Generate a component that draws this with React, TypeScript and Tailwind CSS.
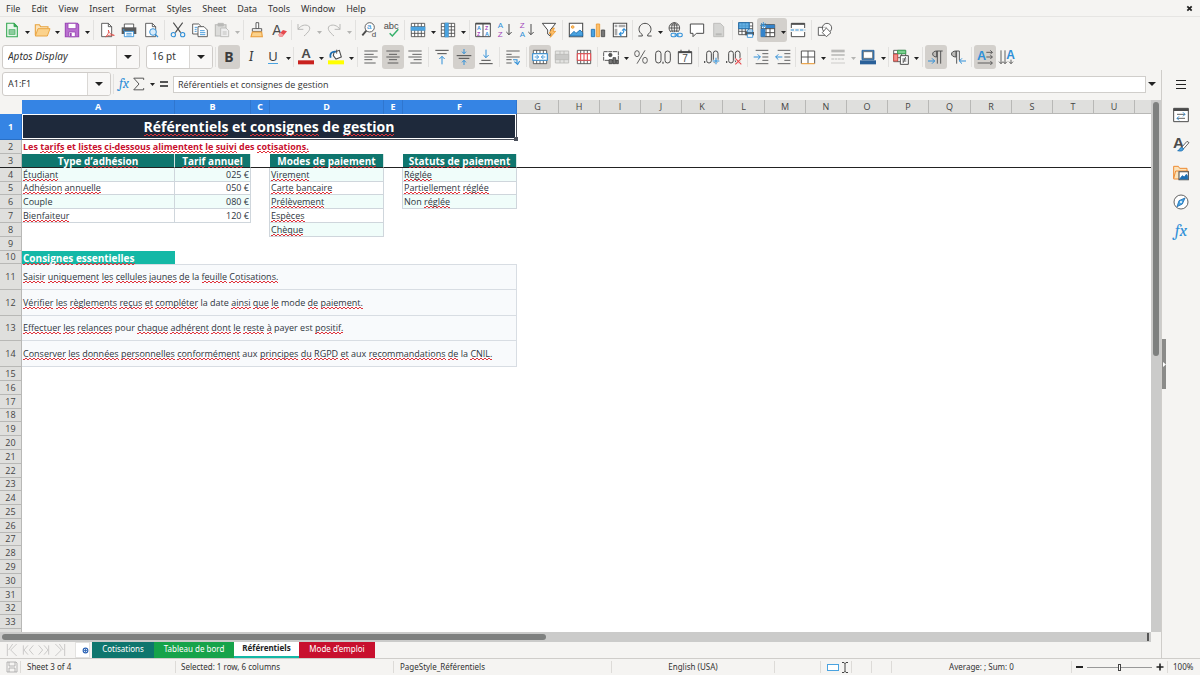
import type { ReactNode } from "react";

const BLUE = "#2f8fd8";
const INK = "#4b4b4b";
const PALE = "#b9b9b7";
const PURPLE = "#a347ba";

function Svg({ children, size = 16 }: { children: ReactNode; size?: number }) {
  return (
    <svg
      width={size}
      height={size}
      viewBox="0 0 24 24"
      fill="none"
      stroke={INK}
      strokeWidth={1.3}
      aria-hidden="true"
      className="shrink-0 overflow-visible font-['Liberation_Sans',sans-serif]"
    >
      {children}
    </svg>
  );
}

function Glyph({
  x,
  y,
  size,
  fill = INK,
  bold,
  children,
}: {
  x: number;
  y: number;
  size: number;
  fill?: string;
  bold?: boolean;
  children: string;
}) {
  return (
    <text x={x} y={y} fontSize={size} fill={fill} stroke="none" fontWeight={bold ? 700 : 400}>
      {children}
    </text>
  );
}

const page = "M4 2h10l5 5v15H4z";
const gridLines = "M2 2h20v20H2zM2 7h20M2 12h20M2 17h20M7 2v20M12 2v20M17 2v20";

const icons: Record<string, ReactNode> = {
  new: (
    <>
      <path d="M4 2h11l5 5v15H4z" fill="#e9f7ec" stroke="#35a853" strokeWidth={1.6} />
      <path d="M15 2v5h5z" fill="#35a853" stroke="#35a853" />
      <path d="M7 11h10v8H7z" fill="#35a853" stroke="none" />
      <path d="M8 13.500h8M8 16.500h8" stroke="#fff" />
    </>
  ),
  open: (
    <>
      <path d="M2 20V4h6l2 3h11v3" fill="#fbe3bb" stroke="#e8a33d" strokeWidth={1.6} />
      <path d="M2 21 6 10h18l-4 11z" fill="#fbd28c" stroke="#e8a33d" strokeWidth={1.4} />
    </>
  ),
  save: (
    <>
      <path d="M2 2h18l2 2v18H2z" fill="#b96fd0" stroke="#9a45b5" strokeWidth={1.6} />
      <path d="M6 2h12v8H6z" fill="#fff" stroke="#9a45b5" />
      <path d="M7 15h10v7H7z" fill="#fff" stroke="#9a45b5" />
      <path d="M8.500 16.500h3v5h-3z" fill="#9a45b5" stroke="none" />
    </>
  ),
  pdf: (
    <>
      <path d={page} fill="#fff" />
      <path d="M14 2v5h5" />
      <path d="M10 22c4-3 5-7 4-10 1 5 4 7 9 8-5-1-9 0-13 2z" stroke="#e0453f" strokeWidth={1.2} />
    </>
  ),
  print: (
    <>
      <path d="M5 9V3h14v6" fill="#fff" />
      <path d="M1 8h22v10H1z" fill="#5a5a5a" stroke="none" />
      <path d="M3 11h2v2H3z" fill={BLUE} stroke="none" />
      <path d="M5 14h14v8H5z" fill="#fff" stroke={BLUE} />
      <path d="M8 17h8M8 19.500h8" stroke={BLUE} />
    </>
  ),
  preview: (
    <>
      <path d={page} fill="#fff" />
      <path d="M14 2v5h5" />
      <circle cx="15" cy="15" r="5" fill="#d9ecfa" stroke={BLUE} strokeWidth={1.4} />
      <path d="m18.500 18.500 4 4" stroke={BLUE} strokeWidth={1.8} />
    </>
  ),
  cut: (
    <>
      <path d="m5 1 11 15M19 1 8 16" strokeWidth={1.6} />
      <circle cx="5" cy="19" r="3.200" stroke={BLUE} strokeWidth={1.6} />
      <circle cx="19" cy="19" r="3.200" stroke={BLUE} strokeWidth={1.6} />
    </>
  ),
  copy: (
    <>
      <path d="M1 3h9l4 4v11H1z" fill="#fff" />
      <path d="M9 7h9l5 5v10H9z" fill="#fff" />
      <path d="M4 8h4M4 11h3M4 14h3M12 13h7M12 16h8M12 19h8" stroke={BLUE} />
    </>
  ),
  paste: (
    <>
      <path d="M2 4h16v17H2z" fill="#dcdcda" stroke={PALE} strokeWidth={1.6} />
      <path d="M6 2h8v4H6z" fill={PALE} stroke={PALE} />
      <path d="M10 9h8l4 4v9H10z" fill="#eee" stroke={PALE} />
      <path d="M13 15h6M13 18h6" stroke={PALE} />
    </>
  ),
  clone: (
    <>
      <path d="M10.500 1h4v9h-4z" fill="#fff" />
      <path d="M5 10h14v4H5z" fill="#fff" />
      <path d="M5 15h14l1 7H3z" fill="#fbd28c" stroke="#ea9b36" strokeWidth={1.6} />
    </>
  ),
  clear: (
    <>
      <Glyph x={2} y={19} size={21}>A</Glyph>
      <path d="m11 19 7-7 6 2-7 8h-4z" fill="#e5484d" stroke="none" />
      <path d="m11 19 3-3 5 3-3 3h-3z" fill="#f2a0a2" stroke="none" />
    </>
  ),
  undo: <path d="M3 3v8h8M3 11C7 5 14 3 19 6c4 4 0 9-7 15" stroke={PALE} strokeWidth={1.5} />,
  redo: <path d="M21 3v8h-8M21 11C17 5 10 3 5 6c-4 4 0 9 7 15" stroke={PALE} strokeWidth={1.5} />,
  find: (
    <>
      <circle cx="13" cy="8" r="7" fill="#fff" />
      <path d="m8 13-6 7" strokeWidth={2.8} />
      <Glyph x={9} y={11} size={12} fill={BLUE}>a</Glyph>
      <Glyph x={16} y={23} size={12}>d</Glyph>
    </>
  ),
  spell: (
    <>
      <Glyph x={1} y={11} size={14}>abc</Glyph>
      <path d="m10 17 4 4 9-10" stroke="#35b06a" strokeWidth={2.2} />
    </>
  ),
  row: (
    <>
      <path d={gridLines} fill="#fff" />
      <path d="M1 7h22v6H1z" fill="#4aa3e0" stroke="none" />
    </>
  ),
  col: (
    <>
      <path d={gridLines} fill="#fff" />
      <path d="M7 1h6v22H7z" fill="#4aa3e0" stroke="none" />
    </>
  ),
  sort: (
    <>
      <path d="M1 2h22v20H1zM12 2v20" fill="#fff" strokeWidth={1.5} />
      <path d="M1 2.500h22" strokeWidth={2.500} />
      <Glyph x={3} y={12} size={8} fill={BLUE} bold>A</Glyph>
      <Glyph x={3} y={21} size={8} fill={PURPLE} bold>Z</Glyph>
      <Glyph x={15} y={12} size={8} fill={PURPLE} bold>Z</Glyph>
      <Glyph x={15} y={21} size={8} fill={BLUE} bold>A</Glyph>
    </>
  ),
  az: (
    <>
      <Glyph x={1} y={9} size={12} fill={BLUE}>A</Glyph>
      <Glyph x={1} y={23} size={12} fill={PURPLE}>Z</Glyph>
      <path d="M18 3v16m-4-4 4 4 4-4" strokeWidth={1.5} />
    </>
  ),
  za: (
    <>
      <Glyph x={1} y={9} size={12} fill={PURPLE}>Z</Glyph>
      <Glyph x={1} y={23} size={12} fill={BLUE}>A</Glyph>
      <path d="M18 3v16m-4-4 4 4 4-4" strokeWidth={1.5} />
    </>
  ),
  filter: (
    <>
      <path d="M2 2h20l-8 10v9l-4-3v-6z" fill="#fff" strokeWidth={1.5} />
      <path d="m18 9-6 8h4l-2 6 8-9h-4l2-5z" fill="#fbbf6b" stroke="#ee9b33" />
    </>
  ),
  image: (
    <>
      <path d="M2 2h20v20H2z" fill="#fff" strokeWidth={1.6} />
      <circle cx="7" cy="7.500" r="2" fill="#fbbf6b" stroke="#ee9b33" />
      <path d="m3 20 6-6 3 3 6-5 4 4v5H3z" fill="#4aa3e0" stroke="#1f6fb2" />
    </>
  ),
  chart: (
    <>
      <path d="M2 11h5v11H2z" fill="#4aa3e0" stroke="#1f6fb2" />
      <path d="M9.500 3h5v19h-5z" fill="#fbbf6b" stroke="#ea9b36" />
      <path d="M17 12h5v10h-5z" fill="#777" />
    </>
  ),
  pivot: (
    <>
      <path d="M2 2h20v20H2z" fill="#fff" strokeWidth={1.6} />
      <path d="M4 4h4v4H4zM10 4h10v4H10zM4 10h4v10H4z" fill="#aaa" stroke="none" />
      <path d="M11 18c5 1 7-2 7-7m-3 2 3-3 3 3m-7 2-3 3 3 3" stroke={BLUE} strokeWidth={1.6} />
    </>
  ),
  omega: <path d="M2 21h6v-2c-3-2-5-5-5-8 0-5 4-9 9-9s9 4 9 9c0 3-2 6-5 8v2h6" strokeWidth={1.5} />,
  link: (
    <>
      <circle cx="11" cy="9" r="8" />
      <path d="M3 9h16M11 1v16M5 4.500h12M5 13.500h12" />
      <ellipse cx="11" cy="9" rx="4" ry="8" />
      <path d="M6 15h18v8H6z" fill="#f5f4f2" stroke="none" />
      <rect x="6" y="17" width="8" height="5" rx="2.500" stroke={BLUE} strokeWidth={1.6} />
      <rect x="15" y="17" width="8" height="5" rx="2.500" stroke={BLUE} strokeWidth={1.6} />
      <path d="M11 19.500h7" stroke={BLUE} strokeWidth={1.6} />
    </>
  ),
  comment: <path d="M2 3h20v14H11l-5 5v-5H2z" fill="#fff" strokeWidth={1.5} />,
  header: (
    <>
      <path d={page} fill="#d5d5d3" stroke={PALE} />
      <path d="M7 17h9v3H7z" fill={PALE} stroke="none" />
    </>
  ),
  printArea: (
    <>
      <path d="M1 1h21v18H1zM1 6h21M1 10h21M1 14h21M6 1v18M11 1v18M16 1v18" fill="#fff" />
      <path d="M1 1h16v9H1z" fill="#4aa3e0" fillOpacity={0.85} stroke="#1f6fb2" />
      <path d="M11 15h13v5H11z" fill="#555" stroke="none" />
      <path d="M14 12h8v3h-8zM14 18h8v5h-8z" fill="#fff" stroke={BLUE} />
    </>
  ),
  freeze: (
    <>
      <path d="M2 4h20v18H2zM2 10h20M2 16h20M9 4v18M15 4v18" fill="#fff" strokeWidth={1.5} />
      <path d="M1 10h7v12H1zM9 4h13v5H9z" fill="#3484cc" stroke="none" />
      <path d="M5 0v10M0 5h10M1.500 1.500l7 7M8.500 1.500l-7 7" stroke={BLUE} />
    </>
  ),
  split: (
    <>
      <path d="M2 9V2h20v7M2 15v7h20v-7" fill="#fff" strokeWidth={1.5} />
      <path d="M2 3h20" strokeWidth={2.500} />
      <path d="M1 12h22" stroke={BLUE} strokeWidth={1.6} strokeDasharray="5 2" />
    </>
  ),
  shapes: (
    <>
      <path d="M2 8h12v12H2z" fill="#fff" />
      <circle cx="15" cy="9" r="7" fill="#fff" fillOpacity={0.6} />
      <path d="m14 9 7 7-7 6-6-6z" fill="#fff" />
    </>
  ),
  fontColor: (
    <>
      <Glyph x={5} y={14} size={20} bold>A</Glyph>
      <path d="M0 17h24v6H0z" fill="#c9211e" stroke="none" />
    </>
  ),
  fill: (
    <>
      <path d="m9 5 8-3 3 10-8 3-4-5z" fill="#fff" strokeWidth={1.6} />
      <path d="M4 13C2 7 6 3 12 4" stroke="#1f6fb2" strokeWidth={2.600} />
      <path d="M13 1v6" />
      <path d="M0 17h24v6H0z" fill="#ffff00" stroke="none" />
    </>
  ),
  left: <path d="M2 3h20M2 8h14M2 12h20M2 16h12M2 21h17" />,
  center: <path d="M2 3h20M6 8h12M2 12h20M6 16h12M4 21h16" />,
  right: <path d="M2 3h20M8 8h14M2 12h20M10 16h12M5 21h17" />,
  top: (
    <>
      <path d="M2 2h20M5 7h14" strokeWidth={1.5} />
      <path d="M12 23V11m-4 4 4-4 4 4" stroke={BLUE} strokeWidth={1.5} />
    </>
  ),
  middle: (
    <>
      <path d="M1 10h22M4 14h16" strokeWidth={1.5} />
      <path d="M12 0v7M9 4l3 3 3-3M12 24v-7m-3 3 3-3 3 3" stroke={BLUE} strokeWidth={1.5} />
    </>
  ),
  bottom: (
    <>
      <path d="M2 22h20M5 17h14" strokeWidth={1.5} />
      <path d="M12 1v12m-4-4 4 4 4-4" stroke={BLUE} strokeWidth={1.5} />
    </>
  ),
  wrap: (
    <>
      <path d="M2 3h20M2 8h8M2 12h20M2 16h8M2 21h8" />
      <path d="M12 16h6v5m-4-2 5 4 3-5" stroke={BLUE} strokeWidth={1.6} />
    </>
  ),
  merge: (
    <>
      <path d={gridLines} fill="#fff" />
      <path d="M1 7h22v10H1z" fill="#fff" stroke={BLUE} strokeWidth={1.6} />
      <path d="M4 12h6m-3-3 3 3-3 3M20 12h-6m3-3-3 3 3 3" stroke={BLUE} />
    </>
  ),
  mergeOff: (
    <>
      <path d="M2 3h20v18H2zM9 3v18M15 3v18" fill="#e4e4e2" stroke={PALE} />
      <path d="M2 8h20v8H2z" fill="#c9c9c7" stroke={PALE} />
    </>
  ),
  unmerge: (
    <>
      <path d={gridLines} fill="#fff" />
      <path d="M2 7h20v10H2zM7 7v10M12 7v10M17 7v10" fill="#fff" stroke="#e5484d" strokeWidth={1.6} />
    </>
  ),
  currency: (
    <>
      <path d="M1 4h22v13H1z" fill="#fff" strokeWidth={1.4} strokeDasharray="6 1" />
      <circle cx="11" cy="9" r="2.500" fill="#555" />
      <path d="M9 16h5v6H9zM15 13h4v9h-4zM20 17h3v5h-3z" fill="#777" stroke="#444" />
    </>
  ),
  percent: (
    <>
      <ellipse cx="6" cy="7" rx="3.500" ry="4.500" />
      <ellipse cx="18" cy="17" rx="3.500" ry="4.500" />
      <path d="M18 2 6 22" />
    </>
  ),
  number: (
    <>
      <rect x="1" y="3" width="8" height="18" rx="4" strokeWidth={1.5} />
      <rect x="15" y="3" width="8" height="18" rx="4" strokeWidth={1.5} />
      <path d="M12 19v3" strokeWidth={1.8} />
    </>
  ),
  date: (
    <>
      <path d="M2 4h20v18H2z" fill="#fff" strokeWidth={1.5} />
      <path d="M2 5h20" strokeWidth={2.500} />
      <path d="M6 1v4M18 1v4" strokeWidth={1.6} />
      <Glyph x={8} y={20} size={15}>7</Glyph>
    </>
  ),
  decAdd: (
    <>
      <path d="M1 18v3" strokeWidth={1.8} />
      <rect x="4" y="3" width="7" height="18" rx="3.500" strokeWidth={1.5} />
      <rect x="14" y="3" width="7" height="18" rx="3.500" strokeWidth={1.5} />
      <path d="M18 13v10M13 18h10" stroke="#f5f4f2" strokeWidth={4} />
      <path d="M18 13v10M13 18h10" stroke={BLUE} strokeWidth={1.600} />
    </>
  ),
  decDel: (
    <>
      <path d="M1 18v3" strokeWidth={1.8} />
      <rect x="4" y="3" width="7" height="18" rx="3.500" strokeWidth={1.5} />
      <rect x="14" y="3" width="7" height="18" rx="3.500" strokeWidth={1.5} />
      <path d="m14 14 9 9M23 14l-9 9" stroke="#f5f4f2" strokeWidth={4} />
      <path d="m14 14 9 9M23 14l-9 9" stroke="#e5484d" strokeWidth={1.600} />
    </>
  ),
  indent: (
    <>
      <path d="M4 2h19M14 7h9M14 12h9M14 17h9M4 22h19" />
      <path d="M1 12h10m-4-4 4 4-4 4" stroke={BLUE} strokeWidth={1.500} />
    </>
  ),
  outdent: (
    <>
      <path d="M4 2h19M14 7h9M14 12h9M14 17h9M4 22h19" />
      <path d="M11 12H1m4-4-4 4 4 4" stroke={BLUE} strokeWidth={1.500} />
    </>
  ),
  borders: (
    <>
      <path d="M2 22V3h20v19M12 3v19M2 12h20" fill="#fff" strokeWidth={1.4} />
      <path d="M2 22h20" stroke="#ea9b36" strokeWidth={1.600} />
    </>
  ),
  lineStyle: (
    <>
      <path d="M2 3h20" stroke={PALE} strokeWidth={4} />
      <path d="M2 9h20" stroke={PALE} strokeWidth={2.400} />
      <path d="M2 15h20" stroke={PALE} strokeWidth={1.800} strokeDasharray="4 1" />
      <path d="M2 21h20" stroke={PALE} strokeWidth={1.800} strokeDasharray="2 1" />
    </>
  ),
  lineColor: (
    <>
      <path d="M3 2h18v14H3z" fill="#2f7fc4" stroke="#2a6099" strokeWidth={1.2} />
      <path d="M5 4h14v10H5z" fill="#fff" stroke="#666" strokeWidth={1.2} />
      <path d="M0 17h24v6H0z" fill="#2a6099" stroke="none" />
    </>
  ),
  conditional: (
    <>
      <path d="M1 2h18v17H1zM1 7h18M1 13h18M7 2v17M13 2v17" fill="#fff" />
      <path d="M7 2h12v5H7z" fill="#7ccf90" stroke="#35a853" />
      <path d="M1 8h6v10H1z" fill="#f0918c" stroke="#d84a43" />
      <path d="M11 10h12v13H11z" fill="#fff" strokeWidth={1.500} />
      <path d="M14 15h6M14 18h6M19 12l-4 9" />
    </>
  ),
  ltr: (
    <>
      <path d="M22 3H13c-8 0-8 9 0 9V3M14 3v19M19 3v19" fill="#bcbab7" strokeWidth={1.400} />
      <path d="M0 18h10m-4-4 4 4-4 4" stroke={BLUE} strokeWidth={1.500} />
    </>
  ),
  rtl: (
    <>
      <path d="M14 3H9c-9 0-9 9 0 9V3M10 3v19M14 3v14" fill="#bcbab7" strokeWidth={1.400} />
      <path d="M24 18H14m4-4-4 4 4 4" stroke={BLUE} strokeWidth={1.500} />
    </>
  ),
  horizontal: (
    <>
      <Glyph x={0} y={16} size={19} fill={BLUE} bold>A</Glyph>
      <path d="M14 5h9m-3-3 3 3-3 3M14 12h9m-3-3 3 3-3 3M1 21h22m-3-3 3 3-3 3" />
    </>
  ),
  vertical: (
    <>
      <Glyph x={11} y={15} size={18} fill={BLUE} bold>A</Glyph>
      <path d="M3 2v20m-3-3 3 3 3-3M9 2v20m-3-3 3 3 3-3M18 16v6m-3-3 3 3 3-3" />
    </>
  ),
  properties: (
    <>
      <path d="M1 2h22v20H1z" fill="#fff" strokeWidth={1.500} />
      <path d="M1 4h22" strokeWidth={4} />
      <path d="M6 11h12M6 17h12" />
      <path d="m15 8 3 3-3 3M9 14l-3 3 3 3" stroke={BLUE} strokeWidth={1.500} />
    </>
  ),
  styles: (
    <>
      <Glyph x={0} y={18} size={23} bold>A</Glyph>
      <path d="m13 17 8-9 3 2-8 9z" fill="#fff" />
      <path d="M7 22c3 0 3-5 6-5l3 2c-1 4-5 4-9 3z" fill="#4aa3e0" stroke="#1f6fb2" />
    </>
  ),
  gallery: (
    <>
      <path d="M1 20V2h7l2 3h11v5M1 20 4 9h19l-2 12H1z" fill="#fbe3bb" stroke="#ee8b33" strokeWidth={1.500} />
      <path d="M9 10h14v12H9z" fill="#fff" strokeWidth={1.600} />
      <path d="m10 21 4-5 3 2 3-4 2 3v4z" fill="#1f6fb2" stroke="#1f6fb2" />
    </>
  ),
  navigator: (
    <>
      <circle cx="12" cy="12" r="10.500" fill="#fff" />
      <path d="m18 6-4 9-8 4 3-9z" fill="#4aa3e0" stroke="#1f6fb2" />
      <circle cx="12" cy="12" r="1.500" fill="#fff" stroke="none" />
    </>
  ),
  floppy: <path d="M2 2h18l2 2v18H2zM6 2v8h12V2M6 22v-8h12v8" stroke="#a2a2a0" strokeWidth={1.500} />,
};

type Tool = { icon: string; label: string; menu?: boolean; on?: boolean; off?: boolean };
type ToolGroup = { tools: Tool[]; tight?: boolean };

const standardBar: ToolGroup[] = [
  {
    tools: [
      { icon: "new", label: "New", menu: true },
      { icon: "open", label: "Open", menu: true },
      { icon: "save", label: "Save", menu: true },
    ],
  },
  {
    tools: [
      { icon: "pdf", label: "Export as PDF" },
      { icon: "print", label: "Print" },
      { icon: "preview", label: "Print Preview" },
    ],
  },
  {
    tools: [
      { icon: "cut", label: "Cut" },
      { icon: "copy", label: "Copy" },
      { icon: "paste", label: "Paste", menu: true, off: true },
    ],
  },
  {
    tight: true,
    tools: [
      { icon: "clone", label: "Clone Formatting" },
      { icon: "clear", label: "Clear Direct Formatting" },
    ],
  },
  {
    tools: [
      { icon: "undo", label: "Undo", menu: true, off: true },
      { icon: "redo", label: "Redo", menu: true, off: true },
    ],
  },
  {
    tools: [
      { icon: "find", label: "Find and Replace" },
      { icon: "spell", label: "Spelling" },
    ],
  },
  {
    tools: [
      { icon: "row", label: "Row", menu: true },
      { icon: "col", label: "Column", menu: true },
    ],
  },
  {
    tools: [
      { icon: "sort", label: "Sort" },
      { icon: "az", label: "Sort Ascending" },
      { icon: "za", label: "Sort Descending" },
      { icon: "filter", label: "AutoFilter" },
    ],
  },
  {
    tight: true,
    tools: [
      { icon: "image", label: "Insert Image" },
      { icon: "chart", label: "Insert Chart" },
      { icon: "pivot", label: "Pivot Table" },
    ],
  },
  {
    tools: [
      { icon: "omega", label: "Special Character", menu: true },
      { icon: "link", label: "Hyperlink" },
      { icon: "comment", label: "Comment" },
      { icon: "header", label: "Headers and Footers", off: true },
    ],
  },
  {
    tools: [
      { icon: "printArea", label: "Define Print Area" },
      { icon: "freeze", label: "Freeze Rows and Columns", menu: true, on: true },
      { icon: "split", label: "Split Window" },
    ],
  },
  { tools: [{ icon: "shapes", label: "Show Draw Functions" }] },
];

const formattingBar: ToolGroup[] = [
  {
    tight: true,
    tools: [
      { icon: "bold", label: "Bold", on: true },
      { icon: "italic", label: "Italic" },
      { icon: "underline", label: "Underline", menu: true },
    ],
  },
  {
    tools: [
      { icon: "fontColor", label: "Font Color", menu: true },
      { icon: "fill", label: "Background Color", menu: true },
    ],
  },
  {
    tools: [
      { icon: "left", label: "Align Left" },
      { icon: "center", label: "Center Horizontally", on: true },
      { icon: "right", label: "Align Right" },
    ],
  },
  {
    tools: [
      { icon: "top", label: "Align Top" },
      { icon: "middle", label: "Center Vertically", on: true },
      { icon: "bottom", label: "Align Bottom" },
    ],
  },
  { tools: [{ icon: "wrap", label: "Wrap Text" }] },
  {
    tools: [
      { icon: "merge", label: "Merge and Center Cells", on: true },
      { icon: "mergeOff", label: "Merge Cells", off: true },
      { icon: "unmerge", label: "Unmerge Cells" },
    ],
  },
  {
    tools: [
      { icon: "currency", label: "Format as Currency", menu: true },
      { icon: "percent", label: "Format as Percent" },
      { icon: "number", label: "Format as Number" },
      { icon: "date", label: "Format as Date" },
    ],
  },
  {
    tools: [
      { icon: "decAdd", label: "Add Decimal Place" },
      { icon: "decDel", label: "Delete Decimal Place" },
    ],
  },
  {
    tight: true,
    tools: [
      { icon: "indent", label: "Increase Indent" },
      { icon: "outdent", label: "Decrease Indent" },
    ],
  },
  {
    tight: true,
    tools: [
      { icon: "borders", label: "Borders", menu: true },
      { icon: "lineStyle", label: "Border Style", menu: true, off: true },
      { icon: "lineColor", label: "Border Color", menu: true },
    ],
  },
  { tools: [{ icon: "conditional", label: "Conditional Formatting", menu: true }] },
  {
    tools: [
      { icon: "ltr", label: "Left-To-Right", on: true },
      { icon: "rtl", label: "Right-To-Left" },
    ],
  },
  {
    tools: [
      { icon: "horizontal", label: "Text direction from left to right", on: true },
      { icon: "vertical", label: "Text direction from top to bottom" },
    ],
  },
];

const letterIcons: Record<string, ReactNode> = {
  bold: <span className="text-sm leading-none font-bold text-[#3c3c3c]">B</span>,
  italic: <span className="font-serif text-sm leading-none text-[#3c3c3c] italic">I</span>,
  underline: (
    <span className="border-b border-[#4aa3e0] text-[13px] leading-[13px] text-[#3c3c3c]">U</span>
  ),
};

function Caret({ off, large }: { off?: boolean; large?: boolean }) {
  return (
    <svg
      width={large ? 8 : 5}
      height={large ? 4 : 3}
      viewBox="0 0 10 6"
      preserveAspectRatio="none"
      aria-hidden="true"
      className="shrink-0"
    >
      <path d="M0 0h10L5 6z" fill={off ? "#b5b5b3" : "#222"} />
    </svg>
  );
}

function ToolButton({ tool }: { tool: Tool }) {
  return (
    <div className={tool.on ? "flex rounded-[3px] bg-[#d3d0cc]" : "flex"}>
      <button
        type="button"
        aria-label={tool.label}
        aria-pressed={tool.on}
        disabled={tool.off}
        className="flex h-6 w-[22px] items-center justify-center"
      >
        {letterIcons[tool.icon] ?? <Svg>{icons[tool.icon]}</Svg>}
      </button>
      {tool.menu && (
        <button
          type="button"
          aria-label={`${tool.label} options`}
          disabled={tool.off}
          className="flex h-6 w-2 items-center justify-center pt-1"
        >
          <Caret off={tool.off} />
        </button>
      )}
    </div>
  );
}

function Toolbar({ groups }: { groups: ToolGroup[] }) {
  return (
    <>
      {groups.map((group, i) => (
        <div key={group.tools[0].icon} className="flex items-center">
          {group.tools.map((tool) => (
            <ToolButton key={tool.icon} tool={tool} />
          ))}
          {i < groups.length - 1 && (
            <div className={group.tight ? "flex w-[3px] justify-center" : "flex w-[5px] justify-center"}>
              <div className="h-5 w-px bg-[#e2e1df]" />
            </div>
          )}
        </div>
      ))}
    </>
  );
}

function Combo({
  label,
  value,
  field,
  button,
}: {
  label: string;
  value: string;
  field: string;
  button: string;
}) {
  return (
    <div className="flex h-6 overflow-hidden rounded-[3px] border border-[#cfccc9] bg-white">
      <input aria-label={label} defaultValue={value} className={`bg-transparent pl-[5px] outline-none ${field}`} />
      <button
        type="button"
        aria-label={`${label} list`}
        className={`flex items-center justify-center border-l border-[#dad8d5] bg-[#f8f7f6] ${button}`}
      >
        <Caret large />
      </button>
    </div>
  );
}

const menus = ["File", "Edit", "View", "Insert", "Format", "Styles", "Sheet", "Data", "Tools", "Window", "Help"];

const ROW_SCALE = 0.919;
const COLUMNS = [153, 76, 19, 114, 19, 114];
const LETTERS = "ABCDEFGHIJKLMNOPQRSTU".split("");

const tallRows = [1, 11, 12, 13, 14];
const rowPoints = Array.from({ length: 33 }, (_, i) => (tallRows.includes(i + 1) ? 28 : 15));

function rowHeight(row: number) {
  const before = rowPoints.slice(0, row - 1).reduce((a, b) => a + b, 0);
  return Math.ceil((before + rowPoints[row - 1]) * ROW_SCALE) - Math.ceil(before * ROW_SCALE);
}

function columnWidth(i: number) {
  if (i < COLUMNS.length) return COLUMNS[i];
  const n = i - COLUMNS.length;
  return Math.ceil((n + 1) * 41.2) - Math.ceil(n * 41.2);
}

/* Words between underscores are the ones the spell checker flags. */
function Spelled({ text }: { text: string }) {
  return (
    <>
      {text.split("_").map((part, i) =>
        i % 2 === 1 ? (
          <span
            key={i}
            className="bg-[linear-gradient(90deg,#e0323a_50%,transparent_50%),linear-gradient(90deg,#e0323a_50%,transparent_50%)] bg-[length:4px_1px,4px_1px] bg-[position:0_100%,2px_calc(100%_-_1px)] bg-repeat-x"
          >
            {part}
          </span>
        ) : (
          part
        ),
      )}
    </>
  );
}

type Cell = { text: string; span?: number; style: string };

const th = "bg-[#0f766e] text-center text-[10px] font-bold text-white border-r border-[#d5e5e3]";
const teal = "bg-[#f0fdfa] border-b border-r border-[#cfd6dc]";
const plain = "border-b border-r border-[#cfd6dc]";
const note = "bg-[#f8fafc] border-b border-r border-[#d8dde3]";

const cells: Record<string, Cell> = {
  A1: {
    text: "_Référentiels_ et _consignes_ de _gestion_",
    span: 6,
    style:
      "relative bg-[#1e293b] text-center text-[14px] leading-5 font-bold text-white border-b border-r border-[#4a4f5a] shadow-[inset_0_0_0_1px_#fff]",
  },
  A2: {
    text: "Les _tarifs_ et _listes_ _ci-dessous_ _alimentent_ _le_ _suivi_ des _cotisations._",
    span: 6,
    style: "font-bold text-[#c8102e]",
  },
  A3: { text: "Type _d’adhésion_", style: th },
  B3: { text: "_Tarif_ _annuel_", style: th },
  D3: { text: "Modes _de_ _paiement_", style: th },
  F3: { text: "_Statuts_ _de_ _paiement_", style: th },
  A4: { text: "_Étudiant_", style: teal },
  B4: { text: "025 €", style: `${teal} text-right` },
  D4: { text: "_Virement_", style: teal },
  F4: { text: "_Réglée_", style: teal },
  A5: { text: "_Adhésion_ _annuelle_", style: plain },
  B5: { text: "050 €", style: `${plain} text-right` },
  D5: { text: "_Carte_ _bancaire_", style: plain },
  F5: { text: "_Partiellement_ _réglée_", style: plain },
  A6: { text: "Couple", style: teal },
  B6: { text: "080 €", style: `${teal} text-right` },
  D6: { text: "_Prélèvement_", style: teal },
  F6: { text: "Non _réglée_", style: teal },
  A7: { text: "_Bienfaiteur_", style: plain },
  B7: { text: "120 €", style: `${plain} text-right` },
  D7: { text: "_Espèces_", style: plain },
  D8: { text: "_Chèque_", style: teal },
  A10: { text: "_Consignes_ _essentielles_", style: "bg-[#14b8a6] text-[10px] font-bold text-white" },
  A11: {
    text: "_Saisir_ _uniquement_ _les_ _cellules_ _jaunes_ _de_ la _feuille_ _Cotisations._",
    span: 6,
    style: `${note} border-t`,
  },
  A12: {
    text: "_Vérifier_ _les_ _règlements_ _reçus_ _et_ _compléter_ la date _ainsi_ _que_ _le_ mode _de_ _paiement._",
    span: 6,
    style: note,
  },
  A13: {
    text: "_Effectuer_ _les_ _relances_ pour _chaque_ _adhérent_ _dont_ _le_ _reste_ _à_ payer est _positif._",
    span: 6,
    style: note,
  },
  A14: {
    text: "_Conserver_ _les_ _données_ _personnelles_ _conformément_ aux _principes_ _du_ _RGPD_ _et_ aux _recommandations_ _de_ la _CNIL._",
    span: 6,
    style: note,
  },
};

/* Empty cells left of a bordered block carry that block's left edge. */
const leftEdges = ["C4", "C5", "C6", "C7", "C8", "E4", "E5", "E6"];

function SheetRow({ row }: { row: number }) {
  const out: ReactNode[] = [];
  for (let c = 0; c <= LETTERS.length; c++) {
    const id = `${LETTERS[c] ?? "V"}${row}`;
    const cell = cells[id];
    const edge = row === 3 ? "border-b border-b-[#222]" : "";
    if (cell) {
      out.push(
        <td key={id} colSpan={cell.span} className={`px-px py-0 whitespace-nowrap ${cell.style} ${edge}`}>
          <Spelled text={cell.text} />
          {id === "A1" && <span className="absolute -right-0.5 -bottom-0.5 size-1 bg-[#4a4f5a]" />}
        </td>,
      );
      c += (cell.span ?? 1) - 1;
    } else {
      out.push(
        <td key={id} className={`p-0 ${edge} ${leftEdges.includes(id) ? "border-r border-[#cfd6dc]" : ""}`} />,
      );
    }
  }
  return (
    <tr style={{ height: rowHeight(row) }}>
      <th
        scope="row"
        className={
          row === 1
            ? "border-r border-b border-[#2a6fc4] bg-[#3584e4] p-0 font-bold text-white"
            : `border-r border-b border-r-[#b8b8b6] bg-[#dfdfdd] p-0 font-normal text-[#444] ${row === 3 ? "border-b-[#222]" : "border-b-[#b8b8b6]"}`
        }
      >
        {row}
      </th>
      {out}
    </tr>
  );
}

function Sheet() {
  return (
    <table className="h-full w-full table-fixed border-separate border-spacing-0 font-['Open_Sans','Noto_Sans',sans-serif] text-[9px] leading-[12px] text-[#2f3640]">
      <colgroup>
        <col className="w-[22px]" />
        {LETTERS.map((l, i) => (
          <col key={l} style={{ width: columnWidth(i) }} />
        ))}
        <col />
      </colgroup>
      <thead>
        <tr className="h-[14px]">
          <td className="bg-[#f5f4f2] p-0" />
          {LETTERS.map((l, i) => (
            <th
              key={l}
              scope="col"
              className={
                i < 6
                  ? "border-r border-[#2f76cf] bg-[#3584e4] p-0 font-bold text-white"
                  : "border-r border-b border-[#b8b8b6] bg-[#dfdfdd] p-0 font-normal text-[#444]"
              }
            >
              {l}
            </th>
          ))}
          <td className="border-b border-[#b8b8b6] bg-[#dfdfdd] p-0" />
        </tr>
      </thead>
      <tbody>
        {rowPoints.map((_, i) => (
          <SheetRow key={i} row={i + 1} />
        ))}
        <tr>
          <td className="border-r border-[#b8b8b6] bg-[#dfdfdd] p-0" />
          <td colSpan={LETTERS.length + 1} className="p-0" />
        </tr>
      </tbody>
    </table>
  );
}

function FormulaBar() {
  return (
    <div className="flex h-[30px] shrink-0 items-center pb-0.5 pl-0.5">
      <Combo label="Name Box" value="A1:F1" field="w-[84px]" button="w-[23px]" />
      <div className="mx-0.5 h-5 w-px bg-[#e2e1df]" />
      <button type="button" aria-label="Function Wizard" className="w-4 font-serif text-[14px] leading-none text-[#2f8fd8] italic">
        fx
      </button>
      <button type="button" aria-label="Select Function" className="flex w-[23px] items-center justify-between">
        <Svg size={14}>
          <path d="M20 5V2H3l9 10-9 10h17v-3" strokeWidth={1.6} />
        </Svg>
        <Caret />
      </button>
      <button type="button" aria-label="Formula" className="flex w-[18px] flex-col items-center gap-[2px]">
        <span className="h-[2px] w-2 bg-[#555]" />
        <span className="h-[2px] w-2 bg-[#555]" />
      </button>
      <input
        aria-label="Input line"
        defaultValue="Référentiels et consignes de gestion"
        className="h-[17px] min-w-0 flex-1 border border-[#d0cecb] bg-white pl-1 font-['Open_Sans','Noto_Sans',sans-serif] outline-none"
      />
      <button type="button" aria-label="Expand Formula Bar" className="flex w-[15px] justify-center pr-1">
        <Caret large />
      </button>
    </div>
  );
}

const sheetTabs = [
  { name: "Cotisations", style: "w-[62px] bg-[#0f766e] text-white" },
  { name: "Tableau de bord", style: "w-[80px] bg-[#16a34a] text-white" },
  { name: "Référentiels", style: "w-[65px] border-b-2 border-[#14b8a6] bg-white font-bold text-[#222]" },
  { name: "Mode d’emploi", style: "w-[76px] bg-[#c8102e] text-white" },
];

const navIcons = [
  { label: "First Sheet", d: "M5 3v18M19 3l-9 9 9 9M13 3l-6 9" },
  { label: "Previous Sheet", d: "M5 5v14M12 5l-6 7 6 7M20 5l-6 7 6 7" },
  { label: "Next Sheet", d: "M19 5v14M12 5l6 7-6 7M4 5l6 7-6 7" },
  { label: "Last Sheet", d: "M19 3v18M5 3l9 9-9 9M11 3l6 9" },
];

function TabBar() {
  return (
    <div className="flex h-4 shrink-0 items-stretch text-[8px]">
      <div className="flex w-[75px] items-center pl-1">
        {navIcons.map((n) => (
          <button key={n.label} type="button" aria-label={n.label} disabled>
            <Svg>
              <path d={n.d} stroke="#c4c3c1" />
            </Svg>
          </button>
        ))}
      </div>
      <button type="button" aria-label="Add Sheet" className="flex w-[15px] items-center justify-end border border-[#e3e2e0] bg-white">
        <Svg size={7}>
          <circle cx="12" cy="12" r="8" fill="#fff" stroke="#2a62b4" strokeWidth={4} />
          <path d="M12 7v10M7 12h10" stroke="#2a62b4" strokeWidth={3} />
        </Svg>
      </button>
      <div role="tablist" className="ml-0.5 flex">
        {sheetTabs.map((t) => (
          <button key={t.name} type="button" role="tab" className={`pb-0.5 leading-none ${t.style}`}>
            {t.name}
          </button>
        ))}
      </div>
    </div>
  );
}

const sideIcons = ["properties", "styles", "gallery", "navigator"];

function Sidebar() {
  return (
    <aside className="relative flex w-[39px] shrink-0 flex-col items-center gap-3 border-l border-[#cfcdca] pt-[5px]">
      <button type="button" aria-label="Sidebar Settings" className="mb-px flex h-[18px] flex-col items-center justify-center gap-[3px]">
        <span className="h-px w-[10px] bg-[#222]" />
        <span className="h-px w-[10px] bg-[#222]" />
        <span className="h-px w-[10px] bg-[#222]" />
      </button>
      {sideIcons.map((name) => (
        <button key={name} type="button" aria-label={name} className="flex h-[17px] items-center">
          <Svg>{icons[name]}</Svg>
        </button>
      ))}
      <button type="button" aria-label="functions" className="h-[17px] font-serif text-[17px] leading-none text-[#2f8fd8] italic">
        fx
      </button>
      <button
        type="button"
        aria-label="Hide sidebar"
        className="absolute top-[269px] left-0 flex h-[50px] w-1 items-center justify-center bg-[#8b8b89]"
      >
        <svg width="3" height="5" viewBox="0 0 3 5" aria-hidden="true">
          <path d="M0 0v5l3-2.500z" fill="#fff" />
        </svg>
      </button>
    </aside>
  );
}

function StatusBar() {
  return (
    <footer className="flex h-[17px] shrink-0 items-center border-t border-[#cfcdca] text-[8px] *:h-3 *:leading-3">
      <div className="flex w-[21px] items-center justify-center border-r border-[#dddbd8] pl-1">
        <Svg size={12}>{icons.floppy}</Svg>
      </div>
      <div className="w-[155px] border-r border-[#dddbd8] pl-1.5">Sheet 3 of 4</div>
      <div className="w-[218px] border-r border-[#dddbd8] pl-[5px]">Selected: 1 row, 6 columns</div>
      <div className="w-[218px] border-r border-[#dddbd8] pl-1.5">PageStyle_Référentiels</div>
      <div className="w-[163px] border-r border-[#dddbd8] text-center">English (USA)</div>
      <div className="w-[46px] border-r border-[#dddbd8]" />
      <div className="flex w-[31px] items-center gap-[3px] border-r border-[#dddbd8] pl-1.5">
        <span className="h-[7px] w-3 border border-[#4aa3e0] bg-white" />
        <svg width="6" height="11" viewBox="0 0 6 11" fill="none" stroke="#444" aria-hidden="true">
          <path d="M0 .5h2l1 1 1-1h2M3 1v9M0 10.500h2l1-1 1 1h2" />
        </svg>
      </div>
      <div className="w-5 border-r border-[#dddbd8]" />
      <div className="w-5 border-r border-[#dddbd8]" />
      <div className="flex-1 border-r border-[#dddbd8] text-center">Average: ; Sum: 0</div>
      <div className="flex w-24 items-center justify-center gap-1 border-r border-[#dddbd8]">
        <button type="button" aria-label="Zoom Out" className="h-[2px] w-[7px] bg-[#222]" />
        <input
          type="range"
          aria-label="Zoom"
          defaultValue={50}
          className="h-px w-[65px] appearance-none bg-[#999] [&::-webkit-slider-thumb]:h-[7px] [&::-webkit-slider-thumb]:w-[3px] [&::-webkit-slider-thumb]:appearance-none [&::-webkit-slider-thumb]:border [&::-webkit-slider-thumb]:border-[#444] [&::-webkit-slider-thumb]:bg-white"
        />
        <button type="button" aria-label="Zoom In">
          <svg width="8" height="8" viewBox="0 0 8 8" stroke="#222" strokeWidth={1.6} aria-hidden="true">
            <path d="M4 .5v7M.5 4h7" />
          </svg>
        </button>
      </div>
      <div className="w-8 pl-[5px]">100%</div>
    </footer>
  );
}

export default function App() {
  return (
    <div className="flex h-screen flex-col overflow-hidden bg-[#f5f4f2] font-['Noto_Sans',sans-serif] text-[9px] text-[#333]">
      <header className="flex h-[17px] shrink-0 items-center justify-between border-b border-[#e6e5e3] pr-[7px] pl-px">
        <nav className="flex gap-px">
          {menus.map((m) => (
            <button key={m} type="button" className="px-[5px] leading-none">
              {m}
            </button>
          ))}
        </nav>
        <button type="button" aria-label="Close Document">
          <svg width="7" height="7" viewBox="0 0 8 8" stroke="#222" strokeWidth={2} aria-hidden="true">
            <path d="m1.500 1.500 5 5M6.500 1.500l-5 5" />
          </svg>
        </button>
      </header>
      <div className="flex h-[26px] shrink-0 items-center pl-px">
        <Toolbar groups={standardBar} />
      </div>
      <div className="flex h-[27px] shrink-0 items-center pl-0.5">
        <div className="mr-1.5">
          <Combo label="Font Name" value="Aptos Display" field="w-[113px] text-[10px] italic" button="w-[23px]" />
        </div>
        <Combo label="Font Size" value="16 pt" field="w-[42px] text-[10px]" button="w-[23px]" />
        <div className="mx-0.5 h-5 w-px bg-[#e2e1df]" />
        <Toolbar groups={formattingBar} />
      </div>
      <div className="flex min-h-0 flex-1">
        <div className="flex min-w-0 flex-1 flex-col">
          <FormulaBar />
          <div className="flex min-h-0 flex-1">
            <main className="min-w-0 flex-1 overflow-hidden bg-white">
              <Sheet />
            </main>
            <div className="w-[10px] shrink-0 bg-[#cbcbca] px-0.5 pt-0.5">
              <div className="h-[48%] rounded-full bg-[#7e807f]" />
            </div>
          </div>
          <div className="mr-[10px] flex h-[10px] shrink-0 items-center justify-between bg-[#cbcbca] px-0.5">
            <div className="h-1.5 w-[544px] rounded-full bg-[#7e807f]" />
            <div className="h-2 w-0.5 bg-[#555]" />
          </div>
          <TabBar />
        </div>
        <Sidebar />
      </div>
      <StatusBar />
    </div>
  );
}
